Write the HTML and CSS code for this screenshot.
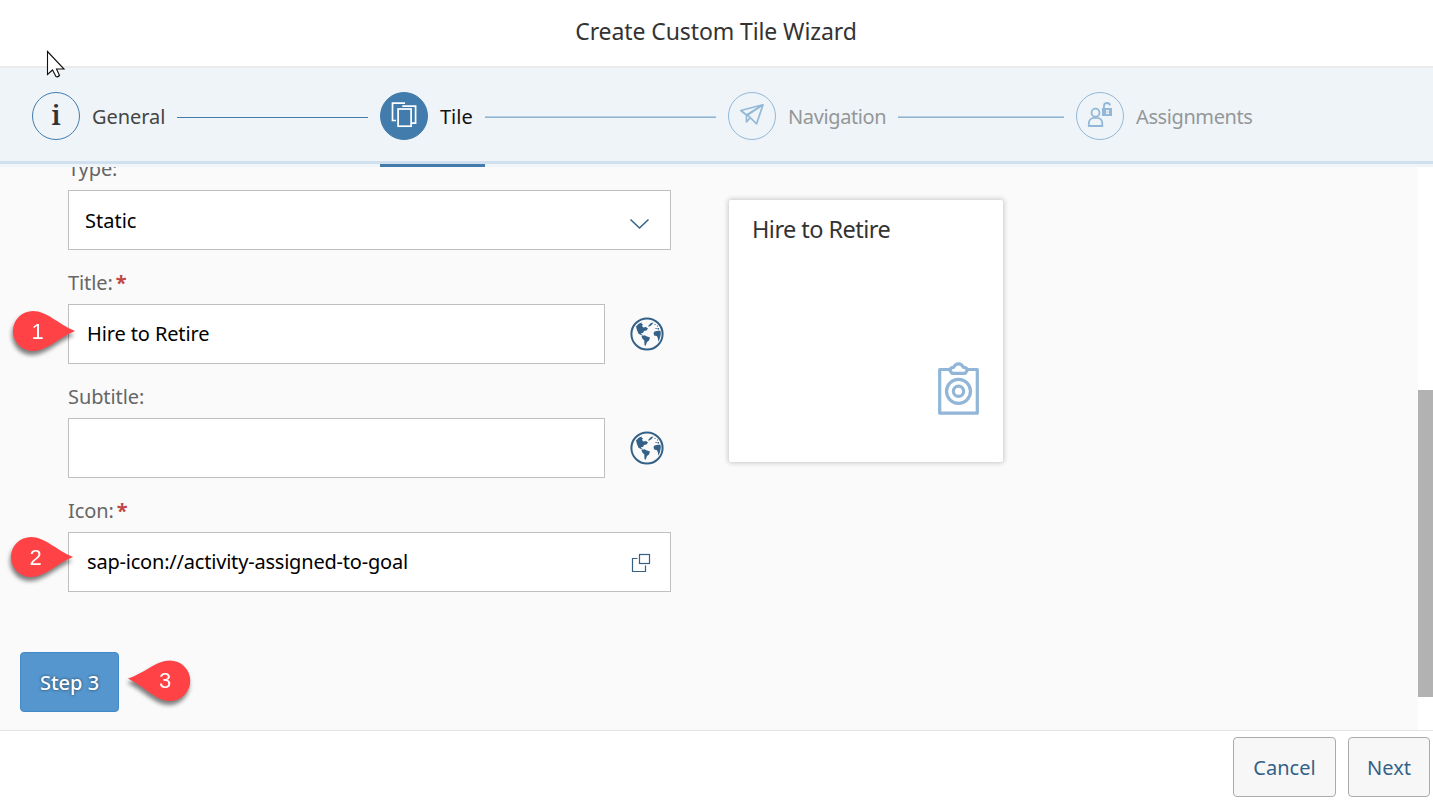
FILE: index.html
```html
<!DOCTYPE html>
<html lang="en">
<head>
<meta charset="utf-8">
<title>Create Custom Tile Wizard</title>
<link rel="stylesheet" href="styles.css">
</head>
<body>
<svg class="defs" width="0" height="0" aria-hidden="true">
  <symbol id="globe" viewBox="0 0 34 34">
    <circle cx="17" cy="17" r="15.600" fill="none" stroke="currentColor" stroke-width="2"/>
    <path fill="currentColor" d="M6 9.500l3-3 3-1-.5 1.500h1.500l-1 2 1.500 1.500 2.500-.5 2 1.500-1.500 2-2.500.5-1 2-1.500 0-.5 1 1.500.8v1l-4-2-1.500-3.500zM18.500 8.500l2.500-2.500 2.500-.5-1.500 2-1 1-1 .5-1.500 1zM11.500 19l3-.7 2.500 1.200 3 1-1 3-2 1.500-1.500 4-1-1-.2-4.500-2-2zM23.500 16l1-1.500 3.500-.8h2.500l.3 3-.8 4-1.500 4-.8-4-.7-1.500-2.800-.8zM24.500 7h1v1h-1zM27 8.500h1v1h-1zM25.500 11h1.200v1h-1.200zM27.500 11h1.500v1.500h-1.500z"/>
  </symbol>
</svg>
<div class="dialog">
  <header class="title-bar"><h1>Create Custom Tile Wizard</h1></header>
  <nav class="steps">
    <div class="step done">
      <span class="badge info">i</span><span class="name general">General</span><i class="line"></i>
    </div>
    <div class="step current">
      <span class="badge"><svg width="48" height="48" fill="none" stroke="currentColor" stroke-width="1.700"><path d="M16 28.500h-3.500V11.200H25M22.300 14.200h13.300v17h-3.800"/><rect x="18.100" y="17" width="13" height="17.200"/></svg></span><span class="name">Tile</span><i class="line"></i>
    </div>
    <div class="step">
      <span class="badge"><svg width="48" height="48" fill="none" stroke="currentColor" stroke-width="1.700" stroke-linejoin="round"><path d="M35 12.800L12.800 18.500l5.700 4.500zM35 12.800L28.600 31.800l-9-8.800zM18.500 23v7l3.500-4"/></svg></span><span class="name navigation">Navigation</span><i class="line"></i>
    </div>
    <div class="step">
      <span class="badge"><svg width="48" height="48" fill="none" stroke="currentColor" stroke-width="1.800"><circle cx="19.500" cy="20.700" r="4"/><path d="M12.800 34v-2.500c0-3.300 2.500-5.700 5.700-5.700h2.300c3.200 0 5.500 2.400 5.500 5.700V34z"/><path d="M28 16v-2.200c0-1.700 1-2.800 3-2.800s3 1 3 2.600"/><path fill="currentColor" stroke="none" fill-rule="evenodd" d="M26 16h10v8H26zm4 2v4h3v-4z"/><path d="M30.500 20h2" stroke-width="1"/></svg></span><span class="name assignments">Assignments</span>
    </div>
  </nav>
  <main class="content">
    <div class="scroll-area">
      <div class="columns">
        <form class="form">
          <label>Type:</label>
          <div class="field select"><span>Static</span><svg width="22" height="14" fill="none" stroke="#346187" stroke-width="1.500"><path d="M1.500 2.500l9 8.500 9-8.500"/></svg></div>
          <label>Title:<b>*</b></label>
          <div class="row"><div class="field"><span class="hire">Hire to Retire</span></div><svg class="globe"><use href="#globe"/></svg></div>
          <label class="subtitle">Subtitle:</label>
          <div class="row"><div class="field"></div><svg class="globe"><use href="#globe"/></svg></div>
          <label>Icon:<b>*</b></label>
          <div class="field icon-field"><span class="icon-name">sap-icon://activity-assigned-to-goal</span><svg width="20" height="20" fill="none" stroke="#346187" stroke-width="1.200"><path d="M6.500 5.500h-5v13h13v-6"/><rect x="8.500" y="1.500" width="10" height="9"/></svg></div>
        </form>
        <section class="tile">
          <h2>Hire to Retire</h2>
          <svg width="42" height="54" fill="none" stroke="#91b6d7" stroke-width="3.200" stroke-linejoin="round"><path d="M12 7.500H1.700v43.700h37.600V7.500H30"/><path d="M12 8.300c0-2 1.500-3 3.800-3 1-2.600 2.800-3.500 4.700-3.500s3.700.9 4.700 3.500c2.600 0 4 1 4 3l-2 3H14z"/><circle cx="20.500" cy="29.300" r="12"/><circle cx="20.500" cy="29.300" r="5.100"/></svg>
        </section>
      </div>
      <button class="primary">Step 3</button>
    </div>
    <div class="scrollbar"><div class="thumb"></div></div>
  </main>
  <footer class="footer"><button class="cancel">Cancel</button><button class="next">Next</button></footer>
</div>
<svg class="callout one" width="76" height="56"><path d="M28 6C42 6 53 19 70 26 53 33 42 46 28 46A20 20 0 0 1 28 6z"/><text x="32.500" y="34">1</text></svg>
<svg class="callout two" width="76" height="56"><path d="M28 6C42 6 53 19 70 26 53 33 42 46 28 46A20 20 0 0 1 28 6z"/><text x="32.500" y="34">2</text></svg>
<svg class="callout three" width="76" height="56"><path d="M47 6.500C33 6.500 22 19 5 24.500 22 33 33 47 47 47A20.200 20.200 0 0 0 47 6.500z"/><text x="42" y="34">3</text></svg>
<svg class="pointer" width="22" height="30"><path d="M1.500 1.500v23l5-4.500 3.500 6.500q1.500 1 3.500-1l-3-6.500h7.500z" fill="#fff" stroke="#111" stroke-width="1.100"/></svg>
</body>
</html>
```
FILE: styles.css
```css
* { box-sizing: border-box; }
body { margin: 0; font: 20px "Noto Sans", "Open Sans", sans-serif; color: #000; overflow: hidden; }
.defs { position: absolute; }
.dialog { display: flex; flex-direction: column; height: 802px; background: #fff; }
h1, h2 { margin: 0; font-weight: 400; color: #333; }

.title-bar { height: 68px; border-bottom: 2px solid #ebebeb; padding-bottom: 5px; display: flex; align-items: center; justify-content: center; }
h1 { font-size: 23px; letter-spacing: -.1px; padding-right: 1px; }

.steps { height: 99px; background: #eff4f8; padding: 24px 9px 0 32px; display: flex; box-shadow: inset 0 -3px #eff4f9, inset 0 -6px #d1e0ee; }
.step { width: 348px; height: 75px; display: flex; color: #93b8d7; align-items: flex-start; }
.badge { width: 48px; height: 48px; border: 1px solid; border-radius: 50%; flex: none; }
.badge svg { display: block; margin: -1px; }
.badge.info { font: 600 27px/44px "Noto Serif", "Liberation Serif", serif; text-align: center; color: #333; border-color: #427cac; }
.name { margin-left: 12px; line-height: 49px; color: #949798; }
.general { letter-spacing: -.05px; }
.navigation { letter-spacing: -.38px; }
.assignments { letter-spacing: -.4px; }
.line { flex: 1; height: 1px; background: #427cac; margin: 25px 12px 0; }
.step:not(.done) .line { height: 2px; margin-top: 24px; background: linear-gradient(#b7cfe2 50%, #8fb4d2 50%); }
.done .name { color: #444; }
.current { background: linear-gradient(#427cac, #427cac) 0 100% / 105px 3px no-repeat; }
.current .badge { background: #427cac; border-color: #427cac; color: #fff; }
.current .name { color: #111; }

.content { height: 563px; display: flex; overflow: hidden; }
.scroll-area { flex: 1; background: #fafafa; padding: 0 20px; }
.columns { display: flex; gap: 58px; margin: -31px 0 60px 48px; }
.form { width: 603px; flex: none; }
label { display: block; height: 54px; padding-top: 11px; line-height: 44px; color: #666; letter-spacing: -.1px; }
label b { color: #c14646; margin-left: 3px; }
.field { height: 60px; border: 1px solid #bfbfbf; background: #fff; display: flex; align-items: center; justify-content: space-between; padding: 0 19px 0 18px; flex: 1; }
.hire { letter-spacing: -.12px; padding-bottom: 2px; }
.icon-name { letter-spacing: -.2px; padding-bottom: 2px; }
.icon-field svg { margin-top: 2px; }
.select { padding-left: 16px; }
.select svg { margin-top: 8px; }
.row { display: flex; align-items: center; padding-right: 7px; gap: 25px; }
.row .globe { width: 34px; height: 34px; color: #346187; flex: none; }
.tile { width: 274px; height: 262px; margin-top: 64px; background: #fff; border-radius: 2px; box-shadow: 0 0 5px 1px rgba(0,0,0,.2); padding: 12px 23px 46px; display: flex; flex-direction: column; justify-content: space-between; }
h2 { font-size: 23.5px; line-height: 34px; letter-spacing: -.55px; }
.tile svg { align-self: flex-end; }

button { font: inherit; height: 60px; border: 1px solid #ababab; border-radius: 4px; background: #f7f7f7; color: #346187; padding: 0; white-space: nowrap; }
.primary { width: 99px; background: #5496cd; border-color: #428ac8; color: #fff; text-shadow: 0 0 3px #0009; font-weight: 500; display: block; }
.scrollbar { width: 15px; padding-top: 223px; background: #fff; }
.thumb { height: 307px; background: #b2b2b2; }
.footer { height: 72px; border-top: 1px solid #e5e5e5; padding: 6px 3px 0; display: flex; justify-content: flex-end; gap: 12px; }
.cancel { width: 103px; }
.next { width: 82px; }

.callout { position: absolute; overflow: visible; filter: drop-shadow(-1px 4px 2px rgba(0,0,0,.5)); }
.callout path { fill: #ff4245; }
.callout text { font: 22px "Liberation Sans", Arial, sans-serif; fill: #fff; text-anchor: middle; }
.one { left: 5px; top: 305px; }
.two { left: 3px; top: 531px; }
.three { left: 123px; top: 654px; }
.pointer { position: absolute; left: 46px; top: 50px; }
```
